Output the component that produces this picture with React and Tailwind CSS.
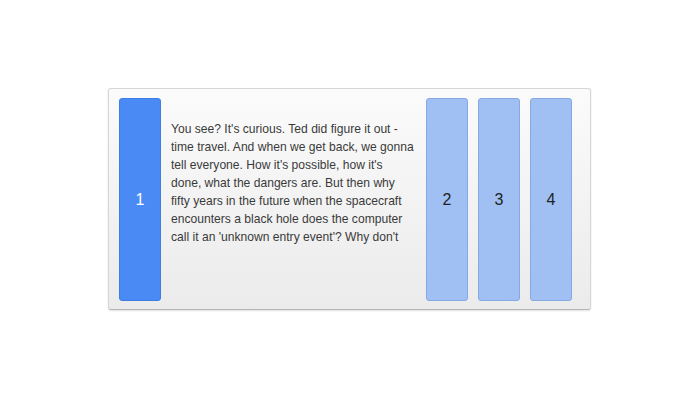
import React, { useState } from 'react';

// Passage shown in the open panel, one entry per line
const passage = [
  "You see? It's curious. Ted did figure it out -",
  'time travel. And when we get back, we gonna',
  "tell everyone. How it's possible, how it's",
  'done, what the dangers are. But then why',
  'fifty years in the future when the spacecraft',
  'encounters a black hole does the computer',
  "call it an 'unknown entry event'? Why don't",
];

const panels = [1, 2, 3, 4];

export default function App() {
  const [open, setOpen] = useState(1);

  return (
    <div className="h-[400px] bg-white pt-[88px]" style={{ fontFamily: '"Liberation Sans", Arial, sans-serif' }}>
      <div className="ml-[108px] flex h-[222px] w-[483px] gap-[10px] rounded-[3px] border border-[#d6d6d6] border-b-[#b4b4b4] bg-gradient-to-b from-[#fbfbfb] to-[#ebebeb] pt-[9px] pb-[8px] pl-[10px] pr-[17px] shadow-[0_1px_2px_rgba(0,0,0,0.12)]">
        {panels.map((id) => {
          const active = id === open;
          return (
            <React.Fragment key={id}>
              <button
                onClick={() => setOpen(id)}
                className={
                  active
                    ? 'flex w-[42px] shrink-0 items-center justify-center rounded-[3px] border border-[#3f7de6] bg-[#4a8af4] text-[16px] text-white'
                    : 'flex w-[42px] shrink-0 items-center justify-center rounded-[3px] border border-[#86a9e3] bg-[#a0c0f4] text-[16px] text-[#222]'
                }
              >
                {id}
              </button>
              {active && (
                <div className="w-[245px] shrink-0 pt-[22px] text-[12.1px] leading-[18px] text-[#3a3a3a]">
                  {passage.map((line) => (
                    <div key={line} className="whitespace-nowrap">
                      {line}
                    </div>
                  ))}
                </div>
              )}
            </React.Fragment>
          );
        })}
      </div>
    </div>
  );
}
